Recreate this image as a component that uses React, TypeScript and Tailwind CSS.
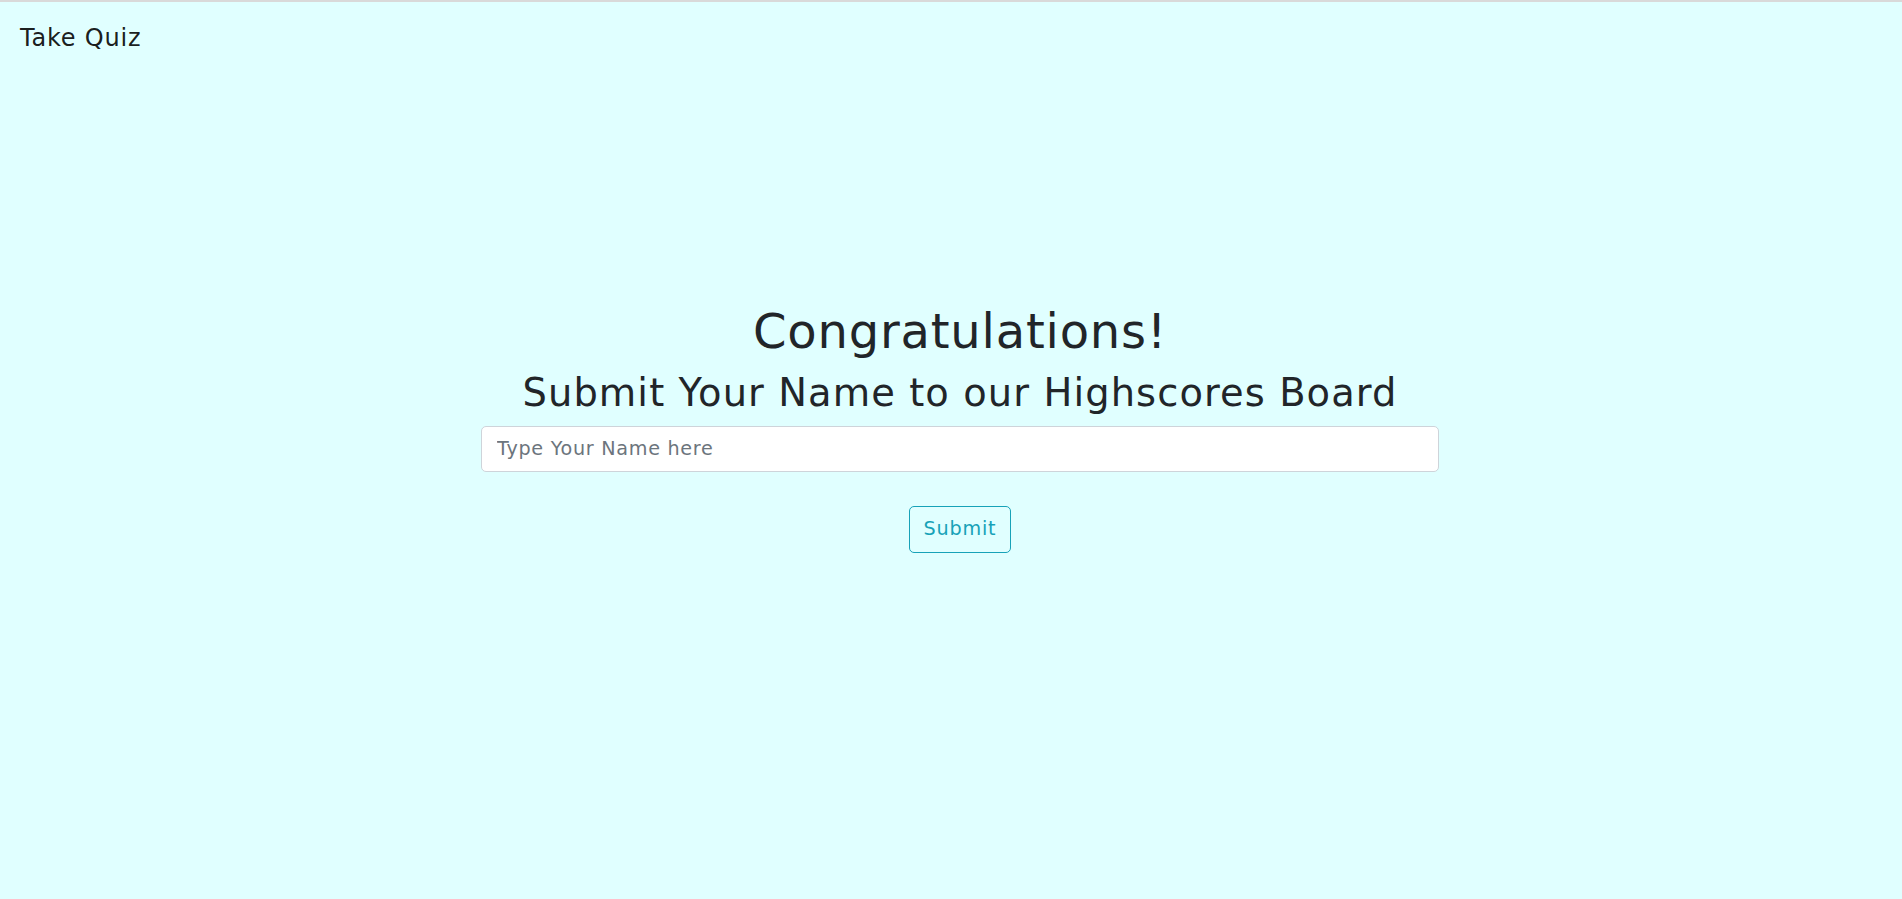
import React from "react";

export default function App() {
  return (
    <div
      className="min-h-screen w-full bg-[#e0ffff] border-t-2 border-[#d9d9d9]"
      style={{ fontFamily: '"DejaVu Sans", Verdana, sans-serif' }}
    >
      <header className="px-5 pt-[18px]">
        <a className="block text-[24px] leading-[36px] tracking-[0.8px] text-black/90">Take Quiz</a>
      </header>
      <main className="flex justify-center pl-[18px] pt-[247px]">
        <div className="flex w-[958px] flex-col items-center">
          <h1 className="mb-[9.6px] text-[48px] font-normal leading-[1.2] tracking-[0.8px] text-[#212529]">
            Congratulations!
          </h1>
          <h2 className="mb-[9.6px] text-[38.4px] font-normal leading-[1.2] tracking-[1.1px] text-[#212529]">
            Submit Your Name to our Highscores Board
          </h2>
          <input
            type="text"
            placeholder="Type Your Name here"
            className="h-[46px] w-full rounded-[5px] border border-[#ced4da] bg-white px-[15px] text-[19.2px] tracking-[0.7px] text-[#495057] placeholder:text-[#6c757d] outline-none"
          />
          <button
            type="button"
            className="mt-[34px] h-[47px] rounded-[5px] border border-[#17a2b8] bg-transparent px-[14px] text-[19.2px] leading-[1.5] tracking-[0.8px] text-[#17a2b8]"
          >
            Submit
          </button>
        </div>
      </main>
    </div>
  );
}
